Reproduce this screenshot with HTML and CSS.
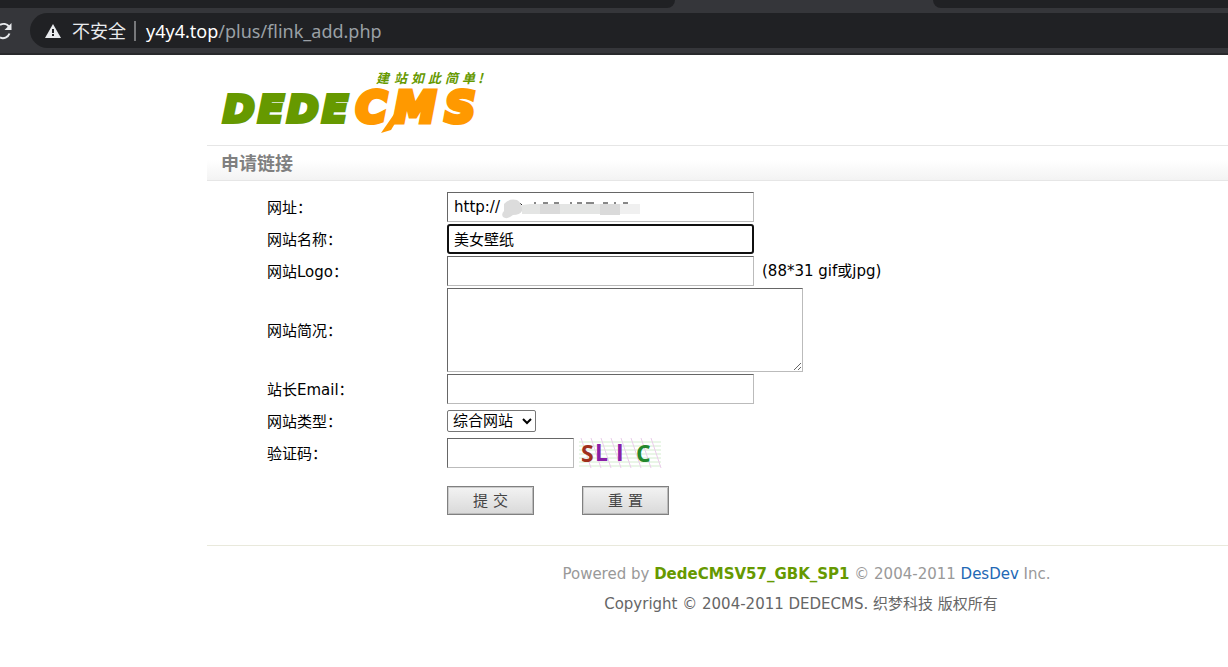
FILE: index.html
```html
<!DOCTYPE html>
<html lang="zh-CN">
<head>
<meta charset="utf-8">
<title>申请链接</title>
<link rel="stylesheet" href="styles.css">
</head>
<body>
<header class="browser">
  <div class="tabs"><span class="tab tab-left"></span><span class="tab tab-right"></span></div>
  <div class="toolbar">
    <button class="reload" type="button" aria-label="刷新">
      <svg width="12" height="20" viewBox="0 0 12 20"><path d="M9 5.500A7 7 0 0 0 0 4M0 16.500A7 7 0 0 0 9.500 12.500" fill="none" stroke="#e8eaed" stroke-width="2"/><path d="M11.500 2v7h-7z" fill="#e8eaed"/></svg>
    </button>
    <div class="address">
      <svg width="16" height="14" viewBox="0 0 16 14"><path d="M8 0l8 14H0z" fill="#e8eaed"/><path d="M7 5h2v4H7zM7 10h2v2H7z" fill="#202124"/></svg>
      <span class="unsafe">不安全</span>
      <span class="url"><b>y4y4.top</b>/plus/flink_add.php</span>
    </div>
  </div>
</header>
<main class="page">
  <div class="brand">
    <svg class="logo" width="270" height="68" viewBox="0 0 270 68" role="img" aria-label="DEDECMS">
      <text class="logo-tag" x="155 173 190 207 224 241 257" y="16">建站如此简单!</text>
      <text class="logo-dede" x="2 37 66 101" y="55">DEDE</text>
      <path d="M160 66l10-3 17-28-9 5z" fill="#ff9900"/>
      <text class="logo-cms" x="135 173 224" y="55">CMS</text>
    </svg>
  </div>
  <h1 class="title">申请链接</h1>
  <form class="form">
    <div class="row">
      <label for="site-url">网址：</label>
      <div class="field masked"><input class="text" id="site-url" type="text" value="http://">
        <svg class="mask" width="138" height="22" viewBox="0 0 138 22">
          <path d="M18 6l3 3M32 6h2M41 6h5M52 6h5M68 6h2M75 6h5M84 6h8M101 6h5M112 6h2M121 6h5" fill="none" stroke="#111"/>
          <path d="M20 8l8-1h92v10H20z" fill="#e4e5e4"/><path d="M38 7h20v10H38zM98 7h20v11H98z" fill="#dadada"/><path d="M118 7h20v10h-20z" fill="#f0f0f0"/>
          <path d="M2 7q5-6 13-4 6 4 5 11-2 4-9 4-6 5-10 2-2-3 1-6z" fill="#dcdcdc"/>
        </svg>
      </div>
    </div>
    <div class="row">
      <label for="site-name">网站名称：</label>
      <div class="field"><input class="text active" id="site-name" type="text" value="美女壁纸"></div>
    </div>
    <div class="row">
      <label for="site-logo">网站Logo：</label>
      <div class="field"><input class="text" id="site-logo" type="text"><span class="hint">(88*31 gif或jpg)</span></div>
    </div>
    <div class="row">
      <label for="site-info">网站简况：</label>
      <div class="field"><textarea class="text info" id="site-info"></textarea></div>
    </div>
    <div class="row">
      <label for="email">站长Email：</label>
      <div class="field"><input class="text" id="email" type="text"></div>
    </div>
    <div class="row">
      <label for="type">网站类型：</label>
      <div class="field"><select class="type" id="type"><option>综合网站</option></select></div>
    </div>
    <div class="row">
      <label for="code">验证码：</label>
      <div class="field"><input class="text code" id="code" type="text">
        <svg class="captcha" width="84" height="30" viewBox="0 0 84 30" role="img" aria-label="SLIC">
          <path d="M0 4h82M0 8h82M0 12h82M0 16h82M0 20h82M0 24h82M0 28h82" stroke="#d4edcf"/>
          <path d="M2 0l10 30M12 0l10 30M22 0l10 30M32 0l10 30M42 0l10 30M52 0l10 30M62 0l10 30M72 0l10 30" stroke="#eacdea"/>
          <text x="2" y="24" fill="#a0301c">S</text><text x="16" y="23" fill="#8a20a8">L</text><text x="37" y="23" fill="#8a20a8">I</text><text x="57" y="24" fill="#23882c">C</text>
        </svg>
      </div>
    </div>
    <div class="actions"><button class="btn" type="submit">提 交</button><button class="btn" type="reset">重 置</button></div>
  </form>
  <footer class="footer">
    <p class="powered">Powered by <a class="product" href="#">DedeCMSV57_GBK_SP1</a> © 2004-2011 <a class="vendor" href="#">DesDev</a> Inc.</p>
    <p class="copyright">Copyright © 2004-2011 DEDECMS. 织梦科技 版权所有</p>
  </footer>
</main>
</body>
</html>
```
FILE: styles.css
```css
* { box-sizing: border-box; }
body { margin: 0; background: #fff; color: #000; font: 15px/20px "DejaVu Sans", "Noto Sans CJK SC", sans-serif; }
.browser { background: #35363a; border-bottom: 2px solid #28292c; }
.tabs { display: flex; justify-content: space-between; height: 8px; }
.tab { background: #202124; }
.tab-left { width: 55%; border-bottom-right-radius: 8px; }
.tab-right { width: 24%; border-bottom-left-radius: 8px; }
.toolbar { display: flex; align-items: center; gap: 18px; padding: 5px 0; }
.reload { display: flex; padding: 0; border: 0; background: none; }
.address { flex: 1; display: flex; align-items: center; height: 35px; padding-left: 15px; background: #202124; border-radius: 18px 0 0 18px; color: #e8eaed; font: 18px/24px "Noto Sans", "Noto Sans CJK SC", sans-serif; }
.unsafe { margin-left: 11px; padding-right: 8px; border-right: 2px solid #77787b; line-height: 20px; }
.url { margin-left: 10px; color: #9aa0a6; }
.url b { color: #fff; font-weight: 400; }
.page { margin-left: 207px; }
.brand { height: 90px; padding: 12px 14px; }
.logo { display: block; }
.logo-tag { font: italic bold 13px "Noto Sans CJK SC", sans-serif; fill: #669900; }
.logo-dede { font: italic bold 38px "DejaVu Sans", sans-serif; fill: #669900; stroke: #669900; stroke-width: 4px; }
.logo-cms { font: italic bold 42px "DejaVu Sans", sans-serif; fill: #ff9900; stroke: #ff9900; stroke-width: 5px; }
.title { margin: 0; height: 36px; padding-left: 14px; border-top: 1px solid #e6e6e6; border-bottom: 1px solid #e6e6e6; background: linear-gradient(#fff 40%, #f3f3f3); color: #808080; font: bold 18px/32px "Noto Sans CJK SC", sans-serif; }
.form { display: flex; flex-direction: column; gap: 2px; padding: 11px 0 30px 60px; }
.row { display: grid; grid-template-columns: 180px 1fr; align-items: center; }
.row label { padding-top: 2px; }
.field { display: flex; align-items: center; }
.masked { position: relative; }
.mask { position: absolute; left: 55px; top: 5px; }
.text { width: 307px; height: 30px; padding: 2px 6px; border: 1px solid; border-color: #666 #bbb #bbb #666; background: #fff; color: #000; font: inherit; }
.active { border: 2px solid #101010; border-radius: 3px; outline: 0; padding: 0 5px 2px; }
.hint { margin-left: 8px; }
.info { display: block; width: 356px; height: 84px; }
.type { width: 89px; height: 22px; margin: 4px 0; padding: 0 0 0 1px; border: 1px solid #767676; border-radius: 2px; background: #fff; font: inherit; }
.code { width: 127px; }
.captcha { margin-left: 5px; font: bold 23px "Open Sans", sans-serif; }
.actions { display: flex; gap: 48px; padding: 16px 0 0 180px; }
.btn { width: 87px; height: 29px; padding: 0; border: 1px solid #808080; background: linear-gradient(#f3f3f3, #d9d9d9); box-shadow: inset 1px 1px #ccc, inset -1px -1px #bbb; color: #444; font: inherit; }
.footer { padding: 13px 0 40px 178px; border-top: 1px solid #e9e9dc; text-align: center; line-height: 30px; }
.footer p { margin: 0; }
.powered { color: #999; }
.footer a { text-decoration: none; }
.product { color: #669900; font-weight: 700; }
.vendor { color: #2268b5; }
.copyright { padding-right: 11px; color: #666; }
```
